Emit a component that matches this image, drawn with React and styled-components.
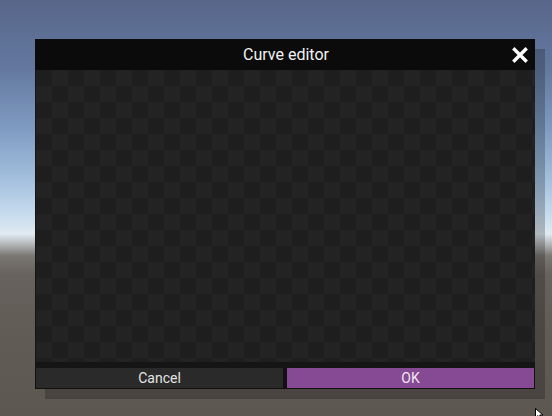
import styled, { createGlobalStyle } from "styled-components";

const Global = createGlobalStyle`
  html, body {
    margin: 0;
    padding: 0;
    width: 552px;
    height: 416px;
    overflow: hidden;
  }
  body {
    font-family: Roboto, "Liberation Sans", sans-serif;
  }
`;

const Scene = styled.div`
  position: relative;
  width: 552px;
  height: 416px;
  box-sizing: border-box;
  padding: 39px 0 0 35px;
  background: linear-gradient(
    to bottom,
    #58668a 0px,
    #6479a0 70px,
    #809cc2 130px,
    #a4c0de 180px,
    #c8dcee 215px,
    #e0eaf2 234px,
    #b4b8ba 244px,
    #7a7672 256px,
    #67625d 275px,
    #625c57 330px,
    #5d5752 416px
  );
`;

const Dialog = styled.div`
  width: 500px;
  display: flex;
  flex-direction: column;
  background: #111;
  box-shadow: 10px 10px 0 rgba(0, 0, 0, 0.22);
`;

const TitleBar = styled.div`
  height: 31px;
  display: grid;
  grid-template-columns: 1fr auto 1fr;
  align-items: center;
  background: #0b0b0b;
  color: #f2f2f2;
  font-size: 16px;
`;

const Title = styled.div`
  grid-column: 2;
  padding-left: 2px;
`;

const Close = styled.button`
  grid-column: 3;
  justify-self: end;
  margin-right: 7px;
  padding: 0;
  border: 0;
  background: none;
  display: flex;
  cursor: pointer;
`;

const Canvas = styled.div`
  height: 292px;
  background-color: #1e1e1e;
  background-image:
    linear-gradient(45deg, #232323 25%, transparent 25%, transparent 75%, #232323 75%),
    linear-gradient(45deg, #232323 25%, transparent 25%, transparent 75%, #232323 75%);
  background-size: 32px 32px;
  background-position: 0 0, 16px 16px;
  border-left: 1px solid #151515;
  border-bottom: 6px solid #151515;
`;

const Footer = styled.div`
  display: grid;
  grid-template-columns: 1fr 1fr;
  gap: 4px;
  padding: 0 1px 1px 1px;
`;

const Button = styled.button`
  height: 20px;
  border: 0;
  padding: 0;
  font-family: Roboto, "Liberation Sans", sans-serif;
  font-size: 14px;
  color: ${p => (p.$primary ? "#f0e6f2" : "#e4e4e4")};
  background: ${p => (p.$primary ? "#854a93" : "#2a2a2a")};
  cursor: pointer;
`;

const Pointer = styled.svg`
  position: absolute;
  left: 535px;
  top: 408px;
`;

export default function App() {
  return (
    <>
      <Global />
      <Scene>
        <Dialog>
          <TitleBar>
            <Title>Curve editor</Title>
            <Close aria-label="close">
              <svg width="16" height="16" viewBox="0 0 16 16">
                <path d="M2.5 2.5 L13.5 13.5 M13.5 2.5 L2.5 13.5" stroke="#fff" strokeWidth="3.4" strokeLinecap="square" />
              </svg>
            </Close>
          </TitleBar>
          <Canvas />
          <Footer>
            <Button>Cancel</Button>
            <Button $primary>OK</Button>
          </Footer>
        </Dialog>
        <Pointer width="10" height="12" viewBox="0 0 10 12">
          <path d="M0.5 0.5 L0.5 10 L3 7.6 L5 11.5 L6.6 10.7 L4.7 7 L8 7 Z" fill="#fff" stroke="#000" strokeWidth="1" />
        </Pointer>
      </Scene>
    </>
  );
}
